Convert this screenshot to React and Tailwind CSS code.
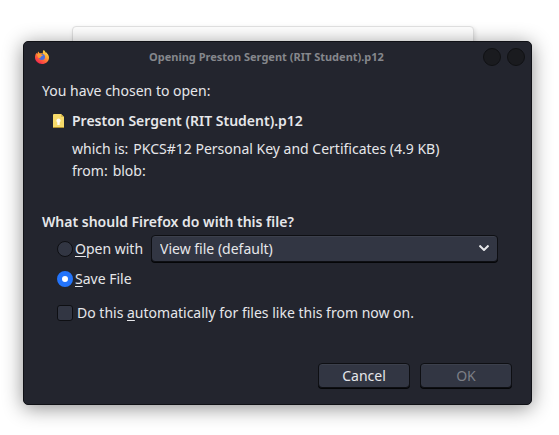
import React, { useState } from "react";

function FirefoxIcon() {
  return (
    <svg viewBox="0 0 16 16" className="size-4 shrink-0" aria-hidden="true">
      <defs>
        <linearGradient id="flame" x1="0.85" y1="0.1" x2="0.25" y2="0.95">
          <stop offset="0" stopColor="#ffe14d" />
          <stop offset="0.35" stopColor="#ffa436" />
          <stop offset="0.7" stopColor="#ff5a3c" />
          <stop offset="1" stopColor="#f0274f" />
        </linearGradient>
      </defs>
      <path
        fill="url(#flame)"
        d="M9.700 1c1 .6 1.600 1.600 1.800 2.600 1-.1 1.500.5 1.800 1.100C14.400 5.600 15 7 15 8.700 15 12.400 11.900 15 8 15S1 12.100 1 8.600C1 6.600 1.600 5 2.600 3.800c.1.5.3.8.6 1.100C3.500 3.900 4 3 4.800 2.400c0 .8.2 1.400.7 1.900C6.500 4 8 4.200 9 4.400 8.600 3.300 8.800 2 9.700 1z"
      />
      <circle cx="8" cy="8" r="3" fill="#4a6fe0" />
      <path fill="#ff9a33" d="M3.300 5.300c1.400-.8 3-.7 4.200.2.600.5 1.300.4 1.500.6-.2.900-1.300 1-1.800 1.400-.5.500-.2 1-.8 1.300-.9.300-1.200 0-1.800.2-.9-.8-1.400-2.200-1.300-3.700z" />
    </svg>
  );
}

function FileIcon() {
  return (
    <svg viewBox="0 0 11 14" className="h-3.5 w-[11px] shrink-0" aria-hidden="true">
      <path fill="#f7db6a" d="M1 0h7l3 3v10a1 1 0 0 1-1 1H1a1 1 0 0 1-1-1V1a1 1 0 0 1 1-1z" />
      <path fill="#b08f2c" d="M0 13h11a1 1 0 0 1-1 1H1a1 1 0 0 1-1-1z" />
      <path fill="#d9b94a" d="M8 0l3 3H8z" />
      <path fill="#fffdf0" d="M5.500 4.500a2.200 2.200 0 0 1 1.200 4V11H4.300V8.500a2.200 2.200 0 0 1 1.200-4z" />
    </svg>
  );
}

const radioClass =
  "size-4 shrink-0 appearance-none rounded-full border border-[#0e0f13] bg-[#323643] checked:border-5 checked:border-[#2374fb] checked:bg-white";

const buttonClass =
  "h-[25px] w-[92px] rounded-[4px] border border-[#0e0f13] bg-[#323643] leading-5 shadow-[0_1px_0_#050608,inset_0_1px_0_#3c404c]";

export default function App() {
  const [action, setAction] = useState("save");

  return (
    <div className="relative min-h-screen bg-white pt-[41px] pr-[27px] pb-[30px] pl-[23px] font-['Noto_Sans',sans-serif] text-sm leading-5 text-[#e6e7ea]">
      <div className="absolute top-[26px] right-[85px] left-[72px] h-10 rounded-[4px] border border-[#e2e2e2] bg-white shadow-[1px_2px_4px_rgba(0,0,0,0.12)]" />
      <main className="relative rounded-[5px] border border-[#101116] bg-[#23252e] shadow-[0_3px_20px_rgba(0,0,0,0.45)]">
        <header className="flex h-[30px] items-center pr-1.5 pl-2.5">
          <FirefoxIcon />
          <h1 className="flex-1 text-center text-[11px] font-bold text-[#85878c]">Opening Preston Sergent (RIT Student).p12</h1>
          <div className="flex gap-1.5">
            <button aria-label="Maximize" className="size-[18px] rounded-full border border-[#101114] bg-[#1a1b1f]" />
            <button aria-label="Close" className="size-[18px] rounded-full border border-[#101114] bg-[#1a1b1f]" />
          </div>
        </header>

        <form className="pt-[9px] pr-[19px] pb-4 pl-[18px]" onSubmit={(e) => e.preventDefault()}>
          <p>You have chosen to open:</p>
          <div className="mt-2.5 flex items-center gap-2 pl-[11px]">
            <FileIcon />
            <p className="font-semibold">Preston Sergent (RIT Student).p12</p>
          </div>
          <dl className="mt-[7px] grid grid-cols-1 pl-[30px] leading-[22px]">
            <div className="flex gap-[5px]">
              <dt>which is:</dt>
              <dd>PKCS#12 Personal Key and Certificates (4.9 KB)</dd>
            </div>
            <div className="flex gap-[5px]">
              <dt>from:</dt>
              <dd>blob:</dd>
            </div>
          </dl>

          <fieldset className="mt-[30px]">
            <legend className="font-semibold">What should Firefox do with this file?</legend>
            <div className="mt-[3px] flex items-center pr-3.5 pl-[15px]">
              <input id="open" type="radio" name="action" className={radioClass} checked={action === "open"} onChange={() => setAction("open")} />
              <label htmlFor="open" className="ml-0.5">
                <u className="underline-offset-2">O</u>pen with
              </label>
              <div className="relative ml-2 flex-1">
                <select aria-label="Application" className="block h-[27px] w-full appearance-none rounded-[4px] border border-[#0e0f13] bg-[#323643] px-2 shadow-[0_1px_0_#050608,inset_0_1px_0_#3c404c]">
                  <option>View file (default)</option>
                </select>
                <svg viewBox="0 0 10 6" className="pointer-events-none absolute top-2.5 right-[9px] h-1.5 w-2.5" fill="none" stroke="#e6e7ea" strokeWidth="2" aria-hidden="true">
                  <path d="M0.500 0.500L5 5l4.500-4.500" />
                </svg>
              </div>
            </div>
            <div className="mt-[7px] flex items-center pl-[15px]">
              <input id="save" type="radio" name="action" className={radioClass} checked={action === "save"} onChange={() => setAction("save")} />
              <label htmlFor="save" className="ml-0.5">
                <u className="underline-offset-2">S</u>ave File
              </label>
            </div>
          </fieldset>

          <div className="mt-3.5 flex items-center pl-[15px]">
            <input id="auto" type="checkbox" className="size-4 shrink-0 appearance-none rounded-[3px] border border-[#0e0f13] bg-[#323643] checked:bg-[#2374fb]" />
            <label htmlFor="auto" className="ml-1">
              Do this <u className="underline-offset-2">a</u>utomatically for files like this from now on.
            </label>
          </div>

          <div className="mt-10 flex justify-end gap-2.5">
            <button type="button" className={buttonClass}>Cancel</button>
            <button type="submit" disabled className={buttonClass + " text-[#7c7f86]"}>OK</button>
          </div>
        </form>
      </main>
    </div>
  );
}
